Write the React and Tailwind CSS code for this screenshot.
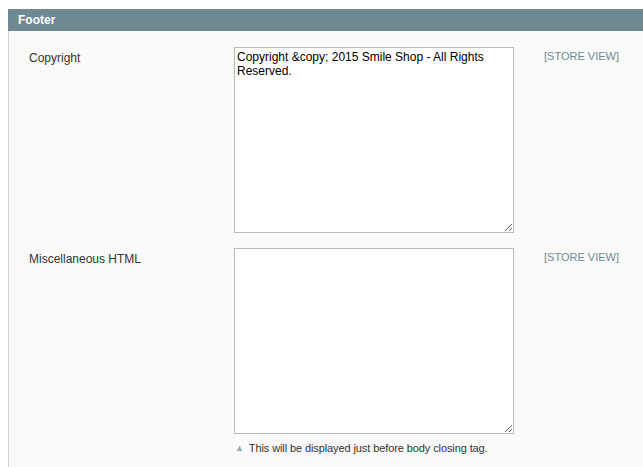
export default function App() {
  const rows = [
    { label: 'Copyright', value: 'Copyright &copy; 2015 Smile Shop - All Rights Reserved.' },
    { label: 'Miscellaneous HTML', value: '', note: 'This will be displayed just before body closing tag.' },
  ];

  return (
    <div className="min-h-[467px] bg-white pt-[9px] pl-[8px] font-['Liberation_Sans',Arial,sans-serif] text-[12px]">
      <div className="flex h-[22px] items-center bg-[#6f8992] pl-[10px] text-[12px] font-bold text-white">
        Footer
      </div>
      <div className="min-h-[436px] border-l border-[#d3d3d3] bg-[#fafafa] pl-[20px] pt-[16px]">
        <div className="flex flex-col gap-[15px]">
          {rows.map((row) => (
            <div key={row.label} className="flex">
              <div className="w-[205px] pt-[2px] text-[#333]">{row.label}</div>
              <div className="w-[280px]">
                <textarea
                  defaultValue={row.value}
                  className="block h-[186px] w-[280px] border border-[#bbb] bg-white px-[2px] py-[2px] text-[12px] leading-[14px] text-black outline-none"
                />
                {row.note && (
                  <div className="mt-[6px] flex items-center gap-[5px] text-[11px] tracking-[-0.1px] text-[#333]">
                    <span className="pl-[1px] text-[9px] text-[#a0a8ab]">▲</span>
                    {row.note}
                  </div>
                )}
              </div>
              <div className="pl-[30px] pt-[1px] text-[11px] text-[#6f8992]">[STORE VIEW]</div>
            </div>
          ))}
        </div>
      </div>
    </div>
  );
}
